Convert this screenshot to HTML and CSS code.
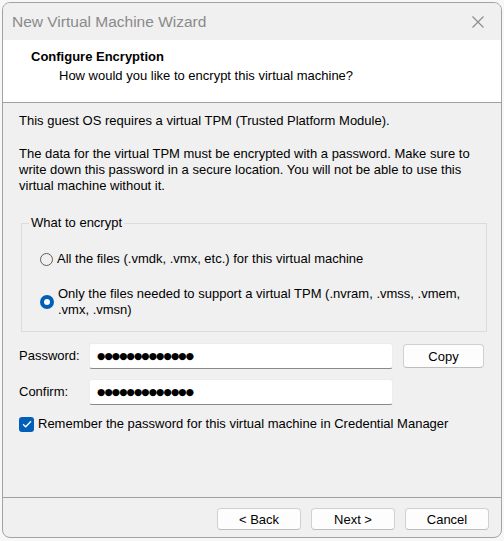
FILE: index.html
```html
<!DOCTYPE html>
<html lang="en">

<head>
    <meta charset="UTF-8">
    <meta name="viewport" content="width=device-width, initial-scale=1.0">
    <title>New Virtual Machine Wizard</title>
    <link rel="stylesheet" href="styles.css">
</head>

<body>
    <div class="window">
        <div class="titlebar">
            <span class="title">New Virtual Machine Wizard</span>
            <span class="close-btn">
                <svg width="12" height="12" viewBox="0 0 12 12">
                    <path d="M0.5 0.5 L11.5 11.5 M11.5 0.5 L0.5 11.5" stroke="#8a8a8a" stroke-width="1.1" fill="none" />
                </svg>
            </span>
        </div>

        <div class="header">
            <div class="header-title">Configure Encryption</div>
            <div class="header-sub">How would you like to encrypt this virtual machine?</div>
        </div>

        <div class="content">
            <p>This guest OS requires a virtual TPM (Trusted Platform Module).</p>
            <p>The data for the virtual TPM must be encrypted with a password. Make sure to
                write down this password in a secure location. You will not be able to use this
                virtual machine without it.</p>

            <fieldset class="group">
                <legend>What to encrypt</legend>
                <label class="radio-row">
                    <span class="radio"></span>
                    <span>All the files (.vmdk, .vmx, etc.) for this virtual machine</span>
                </label>
                <label class="radio-row">
                    <span class="radio checked"></span>
                    <span>Only the files needed to support a virtual TPM (.nvram, .vmss, .vmem,<br>.vmx, .vmsn)</span>
                </label>
            </fieldset>

            <div class="form-row">
                <span class="form-label">Password:</span>
                <div class="field">●●●●●●●●●●●●●</div>
                <button class="btn copy-btn">Copy</button>
            </div>
            <div class="form-row">
                <span class="form-label">Confirm:</span>
                <div class="field">●●●●●●●●●●●●●</div>
            </div>

            <label class="check-row">
                <span class="checkbox">
                    <svg width="10" height="8" viewBox="0 0 10 8">
                        <path d="M1 4.2 L3.7 6.8 L9 1.2" stroke="#fff" stroke-width="1.3" fill="none" />
                    </svg>
                </span>
                <span>Remember the password for this virtual machine in Credential Manager</span>
            </label>
        </div>

        <div class="footer">
            <button class="btn">&lt; Back</button>
            <button class="btn">Next &gt;</button>
            <button class="btn">Cancel</button>
        </div>
    </div>
</body>

</html>
```

FILE: styles.css
```css
body {
    margin: 0;
    background: #f7f7f7;
    font-family: "Liberation Sans", Arial, sans-serif;
    font-size: 13px;
    color: #000;
}

.window {
    margin: 2px;
    width: 498px;
    height: 534px;
    border: 1px solid #a3a3a3;
    border-radius: 8px;
    overflow: hidden;
    display: flex;
    flex-direction: column;
    background: #f0f0f0;
}

.titlebar {
    height: 37px;
    flex: none;
    display: flex;
    align-items: center;
    justify-content: space-between;
    padding: 0 17px 0 9px;
    background: #f0f0f0;
}

.title {
    font-size: 15.5px;
    color: #8a8a8a;
}

.close-btn {
    display: flex;
}

.header {
    height: 63px;
    flex: none;
    box-sizing: border-box;
    background: #ffffff;
    border-bottom: 1px solid #a0a0a0;
    padding-top: 9px;
}

.header-title {
    font-weight: bold;
    font-size: 13px;
    line-height: 16px;
    padding-left: 28px;
}

.header-sub {
    line-height: 16px;
    padding-left: 56px;
    margin-top: 3px;
}

.content {
    flex: 1;
    padding: 10px 14px 0 16px;
    line-height: 16px;
}

.content p {
    margin: 0 0 17px 0;
}

.group {
    margin: 21px 0 0 2px;
    padding: 0;
    height: 115px;
    border: 1px solid #dcdcdc;
}

.group legend {
    margin-left: 7px;
    padding: 0 2px;
}

.radio-row {
    display: flex;
    align-items: center;
    gap: 4px;
    padding-left: 18px;
    margin-top: 20px;
}

.radio-row + .radio-row {
    margin-top: 19px;
}

.radio {
    width: 13px;
    height: 13px;
    box-sizing: border-box;
    border: 1px solid #5e5e5e;
    border-radius: 50%;
    flex: none;
}

.radio.checked {
    width: 14px;
    height: 14px;
    border: 4px solid #005fb8;
    background: #ffffff;
}

.form-row {
    display: flex;
    align-items: center;
    margin-top: 11px;
}

.form-row + .form-row {
    margin-top: 10px;
}

.form-label {
    width: 70px;
}

.field {
    width: 304px;
    height: 26px;
    box-sizing: border-box;
    background: #ffffff;
    border: 1px solid #ececec;
    border-bottom: 1px solid #8a8a8a;
    border-radius: 3px;
    padding-left: 7px;
    display: flex;
    align-items: center;
    font-family: "DejaVu Sans", sans-serif;
    font-size: 9.5px;
    letter-spacing: -0.9px;
}

.btn {
    height: 22px;
    width: 84px;
    padding: 0;
    font-family: "Liberation Sans", Arial, sans-serif;
    font-size: 13px;
    color: #000;
    background: #fdfdfd;
    border: 1px solid #d0d0d0;
    border-bottom-color: #bdbdbd;
    border-radius: 4px;
}

.copy-btn {
    width: 81px;
    height: 24px;
    margin-left: 10px;
}

.check-row {
    display: flex;
    align-items: center;
    gap: 4px;
    margin-top: 11px;
}

.checkbox {
    width: 15px;
    height: 15px;
    border-radius: 3px;
    background: #005fb8;
    display: flex;
    align-items: center;
    justify-content: center;
    flex: none;
}

.footer {
    height: 40px;
    flex: none;
    box-sizing: border-box;
    border-top: 1px solid #a0a0a0;
    display: flex;
    justify-content: flex-end;
    gap: 10px;
    padding: 10px 12px 0 0;
}
```
